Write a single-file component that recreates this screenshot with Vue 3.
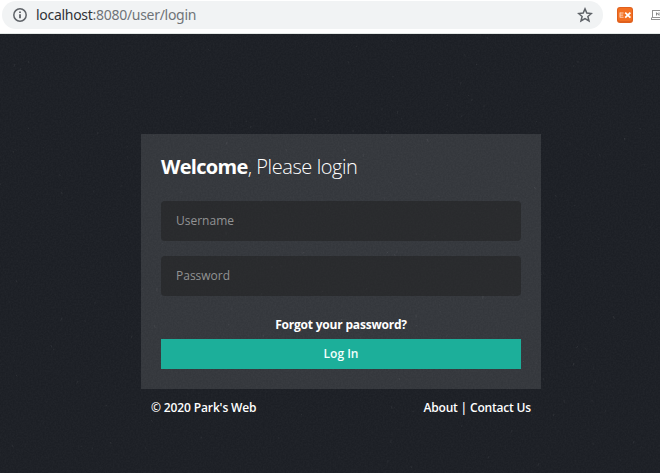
<script setup>
import { ref } from 'vue'

const username = ref('')
const password = ref('')

// Small deterministic generator, so the paper flecks stay put between renders.
let seed = 71
const rand = () => {
  seed = (seed * 16807) % 2147483647
  return seed / 2147483647
}
const flecks = Array.from({ length: 300 }, () => {
  const x = Math.round(rand() * 660)
  const y = Math.round(rand() * 439)
  const dx = (rand() * 3 - 1.5).toFixed(1)
  const dy = (rand() * 2.5 + 0.5).toFixed(1)
  return { d: `M${x} ${y}l${dx} ${dy}`, o: (0.02 + rand() * 0.08).toFixed(3) }
})
</script>

<template>
  <div class="window">
    <header class="toolbar">
      <div class="omnibox">
        <svg class="info" width="16" height="16" viewBox="0 0 16 16">
          <circle cx="8" cy="8" r="6.2" fill="none" stroke="#5f6368" stroke-width="1.5" />
          <path d="M8 7.2v4.1M8 4.5v1.6" stroke="#5f6368" stroke-width="1.8" />
        </svg>
        <div class="url">localhost<span>:8080/user/login</span></div>
        <svg class="star" width="16" height="16" viewBox="0 0 16 16">
          <path
            d="M8 1.9l1.8 4.2 4.6.4-3.5 3 1.1 4.5L8 11.6 4 14l1.1-4.5-3.5-3 4.6-.4z"
            fill="none"
            stroke="#5f6368"
            stroke-width="1.5"
          />
        </svg>
      </div>
      <svg class="ext" width="16" height="16" viewBox="0 0 16 16">
        <rect width="16" height="16" rx="3" fill="#e0601d" />
        <rect x="1" y="1" width="14" height="13" rx="2" fill="#f37022" />
        <path d="M3 5.5v5M3 6h3.6M3 8.1h3.2M3 10.2h3.6" fill="none" stroke="#ffd3b5" stroke-width="1" />
        <path d="M8.2 5.6l5.2 5M13.4 5.6l-5.2 5" stroke="#fff" stroke-width="1.8" />
      </svg>
      <svg class="ext-cut" width="16" height="16" viewBox="0 0 16 16">
        <path d="M1.5 3v8M1 3.5h14v7H1M0 12.5h16M.5 10.5v2" fill="none" stroke="#929292" stroke-width="1" />
        <path d="M5.5 8.5V5.7l2.5 2.6V5.5" fill="none" stroke="#858585" stroke-width="1" />
      </svg>
    </header>

    <main class="page">
      <svg class="texture" width="660" height="439" viewBox="0 0 660 439">
        <filter id="grain" x="0" y="0" width="100%" height="100%">
          <feTurbulence type="fractalNoise" baseFrequency="0.6" numOctaves="2" seed="4" />
          <feColorMatrix values="0 0 0 0 1  0 0 0 0 1  0 0 0 0 1  0.05 0 0 0 -0.015" />
        </filter>
        <rect width="660" height="439" filter="url(#grain)" />
        <path v-for="(f, i) in flecks" :key="i" :d="f.d" :stroke-opacity="f.o" stroke="#fff" stroke-width="0.8" />
      </svg>
      <div class="login">
        <form class="card" @submit.prevent>
          <h1><strong>Welcome</strong>, Please login</h1>
          <input v-model="username" type="text" placeholder="Username" />
          <input v-model="password" type="password" placeholder="Password" />
          <a class="forgot">Forgot your password?</a>
          <button type="submit">Log In</button>
        </form>
        <footer>
          <span>© 2020 Park's Web</span>
          <span class="links"><a>About</a> | <a>Contact Us</a></span>
        </footer>
      </div>
    </main>
  </div>
</template>

<style>
body {
  margin: 0;
  overflow: hidden;
}
</style>

<style scoped>
* {
  box-sizing: border-box;
}
.window {
  width: 660px;
  height: 473px;
  overflow: hidden;
  font-family: 'Open Sans', sans-serif;
}
.toolbar {
  display: flex;
  height: 34px;
  background: #fff;
  border-bottom: 1px solid #e3e8e6;
}
.omnibox {
  display: flex;
  flex: none;
  align-items: center;
  width: 601px;
  height: 28px;
  margin: 1px 0 0 2px;
  padding: 0 10px;
  border-radius: 14px;
  background: #f1f3f4;
}
.url {
  flex: 1;
  margin-left: 8px;
  font: 14px/20px 'Noto Sans', sans-serif;
  letter-spacing: -0.29px;
  color: #303236;
  white-space: nowrap;
}
.url span {
  color: #6f7378;
}
.ext,
.ext-cut {
  flex: none;
  margin: 7px 0 0 14px;
}
.ext-cut {
  margin-left: 18px;
}
.page {
  position: relative;
  display: flex;
  height: 439px;
  padding: 100px 0 0 141px;
  background: #1c1f25;
}
.texture {
  position: absolute;
  top: 0;
  left: 0;
}
.login {
  position: relative;
  width: 400px;
}
.card {
  display: flex;
  flex-direction: column;
  height: 255px;
  padding: 20px;
  background: rgba(255, 255, 255, 0.11);
}
h1 {
  margin: 0 0 21px;
  font-size: 20px;
  line-height: 26px;
  font-weight: 300;
  letter-spacing: -0.42px;
  color: #fff;
  white-space: nowrap;
}
h1 strong {
  font-weight: 700;
  letter-spacing: -0.68px;
}
input {
  flex: none;
  width: 100%;
  height: 40px;
  margin: 0 0 15px;
  padding: 0 15px 2px;
  border: 0;
  border-radius: 4px;
  outline: 0;
  background: rgba(30, 30, 30, 0.5);
  font: 12px/20px 'Open Sans', sans-serif;
  color: #fff;
}
input::placeholder {
  color: #929394;
  opacity: 1;
}
.forgot {
  margin: 4px 0 4px;
  font-size: 12px;
  line-height: 20px;
  font-weight: 700;
  letter-spacing: -0.2px;
  text-align: center;
  color: #fff;
}
button {
  height: 30px;
  padding: 0;
  border: 0;
  background: #1caf9a;
  font: 600 12px/20px 'Open Sans', sans-serif;
  color: #f3fffc;
}
footer {
  display: flex;
  justify-content: space-between;
  padding: 9px 10px;
  font-size: 12px;
  line-height: 20px;
  font-weight: 600;
  letter-spacing: -0.13px;
  color: #fff;
}
.links {
  letter-spacing: -0.18px;
}
</style>
